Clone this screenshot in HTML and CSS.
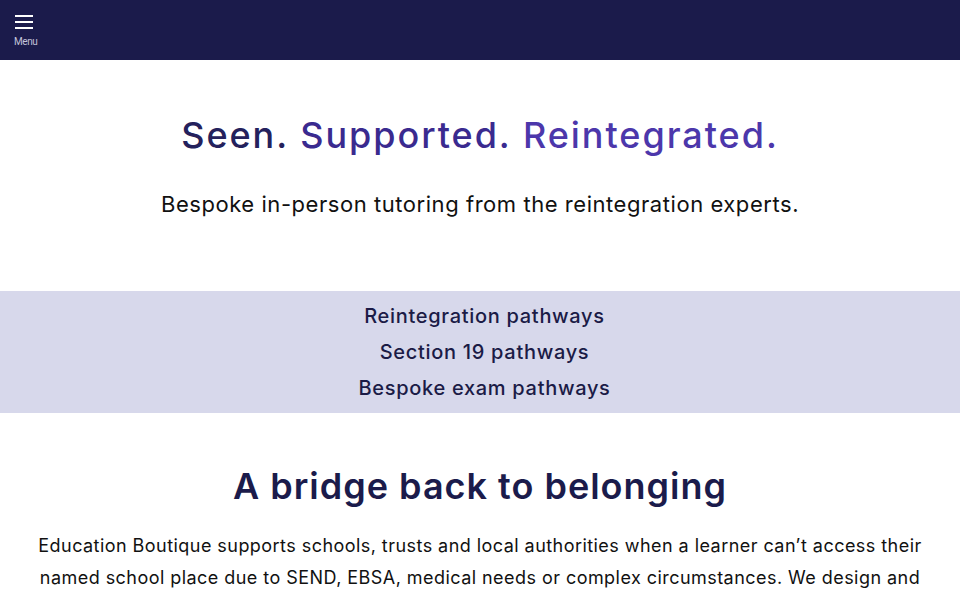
FILE: index.html
```html
<!DOCTYPE html>
<html lang="en">
<head>
<meta charset="utf-8">
<title>Education Boutique</title>
<link rel="stylesheet" href="styles.css">
</head>
<body>
<header class="topbar">
  <button class="menu-btn" type="button">
    <svg class="menu-icon" width="18" height="14" viewBox="0 0 18 14" aria-hidden="true">
      <rect x="0" y="0" width="18" height="2" fill="#ffffff"/>
      <rect x="0" y="6" width="18" height="2" fill="#ffffff"/>
      <rect x="0" y="12" width="18" height="2" fill="#ffffff"/>
    </svg>
    <span class="menu-label">Menu</span>
  </button>
</header>
<main>
  <section class="hero">
    <h1 class="hero-title"><span class="w1">Seen.</span> <span class="w2">Supported.</span> <span class="w3">Reintegrated.</span></h1>
    <p class="hero-sub">Bespoke in-person tutoring from the reintegration experts.</p>
  </section>
  <section class="pathways">
    <ul class="pathway-list">
      <li>Reintegration pathways</li>
      <li>Section 19 pathways</li>
      <li>Bespoke exam pathways</li>
    </ul>
  </section>
  <section class="intro">
    <h2 class="intro-title">A bridge back to belonging</h2>
    <p class="intro-text">Education Boutique supports schools, trusts and local authorities when a learner can’t access their named school place due to SEND, EBSA, medical needs or complex circumstances. We design and deliver bespoke in-person tutoring programmes that rebuild confidence, routine and progress.</p>
  </section>
</main>
</body>
</html>
```
FILE: styles.css
```css
* { box-sizing: border-box; }
html, body { margin: 0; padding: 0; }
body {
  font-family: "Inter", "Noto Sans", sans-serif;
  background: #ffffff;
  color: #111111;
}
.topbar {
  height: 60px;
  background: #1b1b4b;
  display: flex;
  align-items: flex-start;
  padding: 15px 0 0 14px;
}
.menu-btn {
  background: none;
  border: 0;
  padding: 0;
  margin: 0;
  display: flex;
  flex-direction: column;
  align-items: flex-start;
  cursor: pointer;
}
.menu-icon { display: block; margin-left: 1px; }
.menu-label {
  font-family: "Roboto", "Liberation Sans", sans-serif;
  font-size: 10px;
  letter-spacing: -0.4px;
  color: #c2c3da;
  margin-top: 7px;
  line-height: 12px;
}
.hero {
  text-align: center;
  padding: 50px 20px 72px;
}
.hero-title {
  margin: 0;
  font-size: 36px;
  font-weight: 500;
  line-height: 50px;
  letter-spacing: 1.95px;
}
.w1 { color: #24215c; }
.w2 { color: #3a2a8f; }
.w3 { color: #4c37ab; }
.hero-sub {
  margin: 29px 0 0;
  font-size: 22px;
  line-height: 30px;
  letter-spacing: 0.55px;
  color: #111111;
}
.pathways {
  background: #d7d8eb;
  padding: 7px 0;
}
.pathway-list {
  list-style: none;
  margin: 0;
  padding: 0 0 0 9px;
  text-align: center;
  font-size: 20px;
  font-weight: 500;
  line-height: 36px;
  letter-spacing: 0.7px;
  color: #1b1b46;
}
.intro {
  text-align: center;
  padding: 49px 30px 0;
}
.intro-title {
  margin: 0;
  font-size: 36px;
  font-weight: 600;
  line-height: 48px;
  letter-spacing: 1px;
  color: #1b1b4b;
}
.intro-text {
  margin: 20px auto 0;
  font-size: 18px;
  line-height: 32px;
  letter-spacing: 0.45px;
  color: #111111;
}
```
